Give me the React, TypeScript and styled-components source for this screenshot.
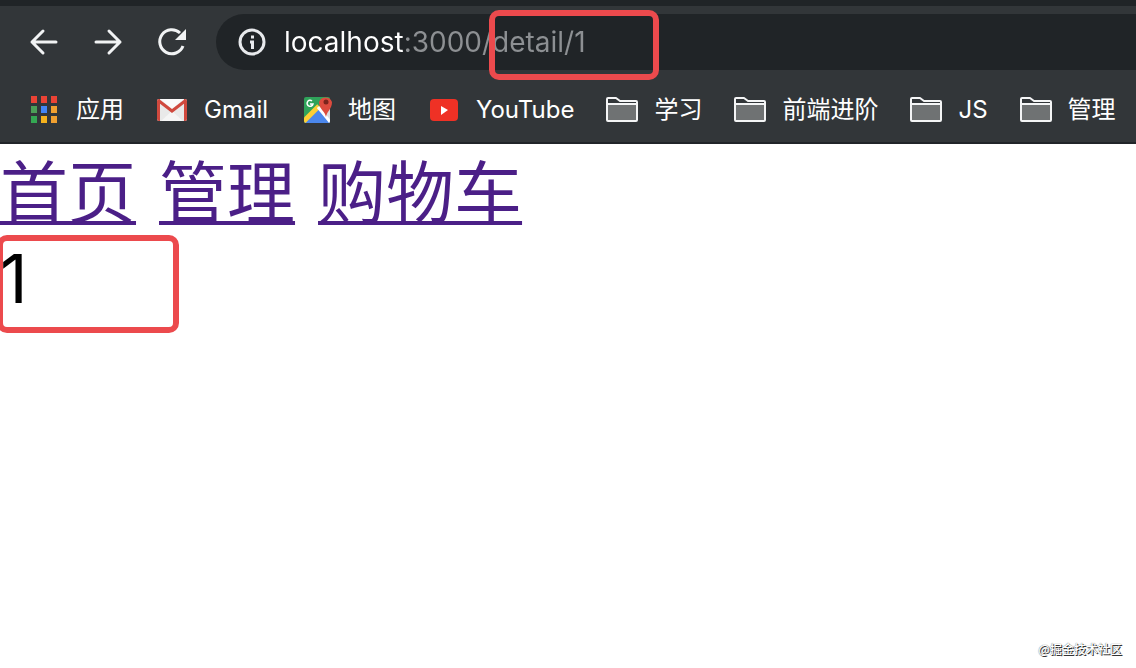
import React, { useState } from "react";
import styled, { createGlobalStyle } from "styled-components";

const GlobalStyle = createGlobalStyle`
  *, *::before, *::after { box-sizing: border-box; }
  body {
    margin: 0;
    background: #fff;
    font-family: Inter, "Noto Sans CJK SC", sans-serif;
  }
`;

const Browser = styled.div`
  display: flex;
  flex-direction: column;
  min-height: 100vh;
  overflow: hidden;
`;

const Chrome = styled.header`
  background: #323639;
  border-top: 6px solid #202427;
  border-bottom: 2px solid #212529;
`;

const Toolbar = styled.div`
  display: flex;
  align-items: center;
  padding: 8px 0 0 12px;
`;

const NavButton = styled.button`
  display: flex;
  align-items: center;
  justify-content: center;
  width: 64px;
  height: 56px;
  padding: 0;
  border: 0;
  background: none;
  color: #f1f3f4;
  cursor: pointer;
`;

const AddressBar = styled.form`
  position: relative;
  display: flex;
  flex: 1;
  align-items: center;
  gap: 16px;
  height: 56px;
  margin-left: 12px;
  padding-left: 20px;
  border-radius: 28px 0 0 28px;
  background: #202427;
  color: #e8eaed;
`;

const UrlInput = styled.input`
  flex: 1;
  min-width: 0;
  height: 40px;
  padding: 0;
  border: 0;
  outline: 0;
  font: 400 28px/40px Inter, "Noto Sans CJK SC", sans-serif;
  color: transparent;
  caret-color: #fff;
  background: linear-gradient(90deg, #fff 120px, #8d9093 120px);
  background-clip: text;
  -webkit-background-clip: text;
`;

const Highlight = styled.span<{ $area: "url" | "output" }>`
  position: absolute;
  z-index: 1;
  border: 6px solid #ec4a4d;
  border-radius: 10px;
  pointer-events: none;
  ${({ $area }) =>
    $area === "url"
      ? "top: -4px; left: 273px; width: 170px; height: 70px;"
      : "top: -1px; left: -3px; width: 182px; height: 98px;"}
`;

const BookmarkBar = styled.nav`
  display: flex;
  gap: 32px;
  padding: 20px 0 12px 28px;
`;

const Bookmark = styled.a`
  display: flex;
  flex: none;
  align-items: center;
  gap: 16px;
  font-size: 24px;
  font-weight: 400;
  line-height: 40px;
  color: #fff;
  text-decoration: none;
  white-space: nowrap;
`;

const Page = styled.main`
  position: relative;
  flex: 1;
  padding-top: 7px;
  font-size: 68px;
  line-height: 85px;
  color: #000;
`;

const Links = styled.nav`
  display: flex;
  gap: 23px;
`;

const PageLink = styled.a`
  color: #4b1f87;
  text-decoration: underline;
  text-decoration-thickness: 4px;
  text-underline-offset: 3px;
  text-decoration-skip-ink: none;
`;

const Output = styled.div`
  position: relative;
`;

const Watermark = styled.footer`
  position: absolute;
  right: 14px;
  bottom: 11px;
  font-size: 12px;
  font-weight: 500;
  line-height: 16px;
  font-family: "Noto Sans CJK SC", sans-serif;
  color: #fff;
  text-shadow: 1px 1px 0 #333, 0 0 1px #444;
`;

const AppsIcon = () => {
  const colors = ["#ea4335", "#ea4335", "#ea4335", "#4c9f58", "#4285f4", "#f0a030", "#34a853", "#f5b21d", "#f0a030"];
  return (
    <svg width="32" height="32" viewBox="0 0 32 32" aria-hidden="true">
      {colors.map((c, i) => (
        <rect key={i} x={3 + (i % 3) * 10} y={2 + Math.floor(i / 3) * 10} width="6" height="7" fill={c} />
      ))}
    </svg>
  );
};

const GmailIcon = () => (
  <svg width="32" height="32" viewBox="0 0 32 32" aria-hidden="true">
    <rect x="1" y="5" width="30" height="22" rx="2" fill="#e9e9e9" />
    <path d="M5 27 16 17 27 27Z" fill="#f5f5f5" />
    <path d="M1 27V7a2 2 0 0 1 2-2h1v22H3a2 2 0 0 1-2-2ZM31 25V7a2 2 0 0 0-2-2h-1v22h1a2 2 0 0 0 2-2Z" fill="#d0493e" />
    <path d="M4 5h24L16 15Z" fill="#fafafa" />
    <path d="M3 7 16 17 29 7" fill="none" stroke="#d0493e" strokeWidth="3" />
  </svg>
);

const MapsIcon = () => (
  <svg width="32" height="32" viewBox="0 0 32 32" aria-hidden="true">
    <defs>
      <clipPath id="map-sheet">
        <rect x="4" y="3" width="26" height="26" rx="2" />
      </clipPath>
    </defs>
    <g clipPath="url(#map-sheet)">
      <rect x="4" y="3" width="26" height="26" fill="#2fa35a" />
      <path d="M19 14 30 7v22H19Z" fill="#d9dce0" />
      <path d="M3 30 19 14 32 30Z" fill="#4b87ec" />
      <path d="M3 28 19 12" stroke="#fdcf35" strokeWidth="5" />
      <path d="M18 13 31 29" stroke="#fff" strokeWidth="3" />
    </g>
    <path d="M12 7A3 3 0 1 0 13 10H10" fill="none" stroke="#fff" strokeWidth="1.500" />
    <path d="M26 23c-1-6-7-8-7-15a7 7 0 0 1 13 0c0 7-5 9-6 15Z" fill="#dd4b3e" />
    <circle cx="26" cy="8" r="2.500" fill="#7c241c" />
  </svg>
);

const YouTubeIcon = () => (
  <svg width="32" height="32" viewBox="0 0 32 32" aria-hidden="true">
    <rect x="2" y="5" width="28" height="22" rx="4" fill="#ef3125" />
    <path d="m13 12 7 4-7 5Z" fill="#fff" />
  </svg>
);

const FolderIcon = () => (
  <svg width="32" height="32" viewBox="0 0 32 32" aria-hidden="true">
    <path d="M1 11h30v16H1Z" fill="#6f7273" />
    <path
      d="M1 10V5a1 1 0 0 1 1-1h8l4 3h16a1 1 0 0 1 1 1v18a1 1 0 0 1-1 1H2a1 1 0 0 1-1-1V10h30"
      fill="none"
      stroke="#f4f5f6"
      strokeWidth="2"
      strokeLinejoin="round"
    />
  </svg>
);

const ArrowIcon = ({ forward }: { forward?: boolean }) => (
  <svg width="32" height="32" viewBox="0 0 32 32" fill="none" stroke="currentColor" strokeWidth="3" strokeLinecap="round" strokeLinejoin="round" aria-hidden="true">
    <path d={forward ? "M4 16h24M17 5l11 11-11 11" : "M28 16H4M15 5 4 16l11 11"} />
  </svg>
);

const ReloadIcon = () => (
  <svg width="32" height="32" viewBox="0 0 32 32" aria-hidden="true">
    <path d="M27 20A12 12 0 1 1 24 7" fill="none" stroke="currentColor" strokeWidth="3" />
    <path d="M30 3v11H19Z" fill="currentColor" />
  </svg>
);

const InfoIcon = () => (
  <svg width="32" height="32" viewBox="0 0 32 32" aria-hidden="true">
    <circle cx="16" cy="16" r="12" fill="none" stroke="currentColor" strokeWidth="3" />
    <path d="M15 11h3M14 16h2.500v7" fill="none" stroke="currentColor" strokeWidth="3" />
  </svg>
);

const bookmarks = [
  { label: "应用", Icon: AppsIcon },
  { label: "Gmail", Icon: GmailIcon },
  { label: "地图", Icon: MapsIcon },
  { label: "YouTube", Icon: YouTubeIcon },
  { label: "学习", Icon: FolderIcon },
  { label: "前端进阶", Icon: FolderIcon },
  { label: "JS", Icon: FolderIcon },
  { label: "管理", Icon: FolderIcon },
];

export default function App() {
  const [url, setUrl] = useState("localhost:3000/detail/1");

  return (
    <Browser>
      <GlobalStyle />
      <Chrome>
        <Toolbar>
          <NavButton type="button" aria-label="后退"><ArrowIcon /></NavButton>
          <NavButton type="button" aria-label="前进"><ArrowIcon forward /></NavButton>
          <NavButton type="button" aria-label="重新加载"><ReloadIcon /></NavButton>
          <AddressBar onSubmit={(e) => e.preventDefault()}>
            <InfoIcon />
            <UrlInput aria-label="地址" spellCheck={false} value={url} onChange={(e) => setUrl(e.target.value)} />
            <Highlight $area="url" />
          </AddressBar>
        </Toolbar>
        <BookmarkBar>
          {bookmarks.map(({ label, Icon }) => (
            <Bookmark key={label} href="#">
              <Icon />
              {label}
            </Bookmark>
          ))}
        </BookmarkBar>
      </Chrome>
      <Page>
        <Links>
          <PageLink href="#home">首页</PageLink>
          <PageLink href="#manage">管理</PageLink>
          <PageLink href="#cart">购物车</PageLink>
        </Links>
        <Output>
          1
          <Highlight $area="output" />
        </Output>
        <Watermark>@掘金技术社区</Watermark>
      </Page>
    </Browser>
  );
}
